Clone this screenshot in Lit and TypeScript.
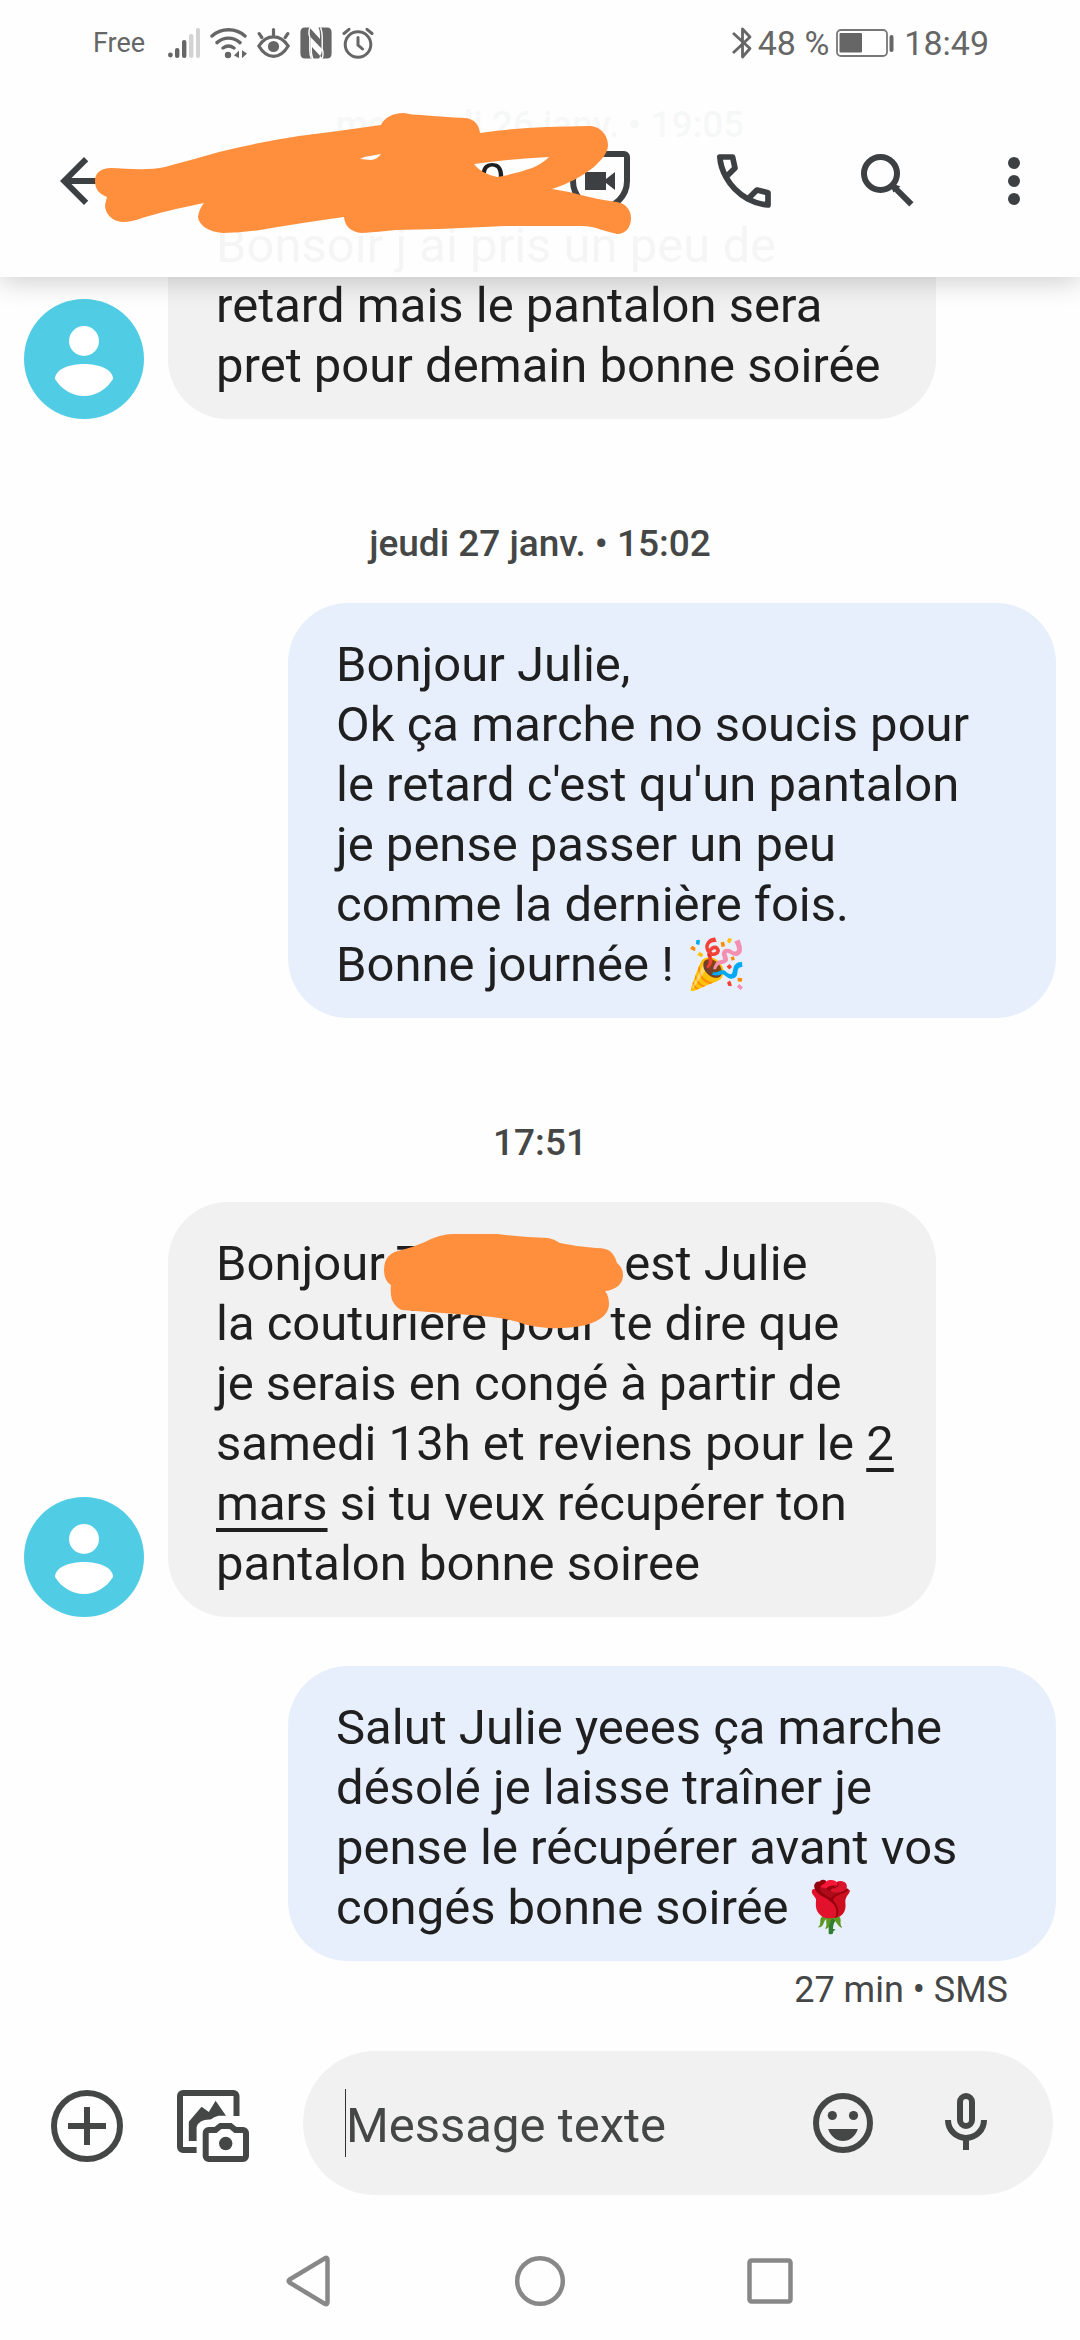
import { LitElement, html, css, svg, nothing } from "lit";
import { customElement, property } from "lit/decorators.js";

const FONT = css`"Roboto", "Liberation Sans", "Noto Color Emoji", sans-serif`;

/* Status bar at the very top of the phone. */
@customElement("status-bar")
class StatusBar extends LitElement {
  static styles = css`
    :host {
      display: flex;
      align-items: center;
      justify-content: space-between;
      height: 84px;
      padding: 2px 91px 0 93px;
      color: #666;
      font-family: ${FONT};
      box-sizing: border-box;
    }
    .group {
      display: flex;
      align-items: center;
      gap: 10px;
    }
    .carrier {
      font-size: 27px;
      margin-right: 13px;
    }
    .level {
      font-size: 34px;
      margin: 0 -3px 0 -4px;
    }
    .clock {
      font-size: 34px;
    }
    svg {
      display: block;
    }
  `;
  render() {
    return html`
      <div class="group">
        <span class="carrier">Free</span>
        <svg width="32" height="32" viewBox="0 0 32 32" fill="currentColor" aria-label="Signal">
          <circle cx="2.4" cy="28" r="2.4" />
          <rect x="7" y="21" width="4.4" height="10" rx="2" />
          <rect x="14" y="13" width="4.4" height="18" rx="2" />
          <rect x="21" y="7" width="4.4" height="24" rx="2" fill="#d3d3d3" />
          <rect x="28" y="1" width="4" height="30" rx="2" fill="#d3d3d3" />
        </svg>
        <svg width="37" height="32" viewBox="0 0 37 32" fill="none" stroke="currentColor" stroke-width="3.4" stroke-linecap="round" aria-label="Wi-Fi">
          <path d="M2 9C11 .6 26 .6 35 9M7 15.6C14 9.6 23 9.6 30 15.6M13 21C16.5 18.4 20.5 18.4 24 21" />
          <circle cx="18" cy="28" r="3.2" fill="currentColor" stroke="none" />
          <path d="M24 28.6l5-5v7.4M37 26.5l-5 4.8v-8" stroke="none" fill="currentColor" />
        </svg>
        <svg width="33" height="32" viewBox="0 0 33 32" fill="none" stroke="currentColor" stroke-width="3.2" stroke-linecap="round" aria-label="Eye comfort">
          <path d="M1.8 19C6 12.5 11 9.8 16.5 9.8S27 12.5 31.2 19C27 26 22 29.4 16.5 29.4S6 26 1.8 19zM16.5 9V2.5M4.8 10.5L2.2 6.6M28.2 10.5l2.6-3.9" />
          <circle cx="16.5" cy="19.5" r="5.6" fill="currentColor" stroke="none" />
        </svg>
        <svg width="32" height="32" viewBox="0 0 32 32" fill="currentColor" aria-label="NFC">
          <path d="M5 .6h4.5L20 12V9.5c0-4-.4-6.5-1.6-8.9h2.2C21.8 3 22 6 22 9.5V22L10.5 10v13c0 3.5.6 6 1.8 8.4H5c-3 0-4.6-1.8-4.6-5V5.6C.4 2.4 2 .6 5 .6z" />
          <path d="M27 31.4h-4.5L12 20v2.5c0 4 .4 6.5 1.6 8.9h5.5C21 27.5 22 26 22 22V9.5C22 6 21.8 3 20.6 .6H27c3 0 4.6 1.8 4.6 5v20.8c0 3.2-1.6 5-4.6 5z" />
          <path d="M9.8 .6c-1 3-1 7 0 9.4V23c0 3.5.6 6 1.6 8.4M22.2 31.4c1-3 1-7 0-9.4V9.5c0-3.5-.6-6-1.6-8.9" fill="none" stroke="#fff" stroke-width="1.4" />
        </svg>
        <svg width="32" height="32" viewBox="0 0 32 32" fill="none" stroke="currentColor" stroke-width="3" stroke-linecap="round" aria-label="Alarm">
          <circle cx="16" cy="17.5" r="12.8" />
          <path d="M16 10.5V18l4.5 4M2 6.5l5-4.2M30 6.5l-5-4.2" />
        </svg>
      </div>
      <div class="group">
        <svg width="20" height="32" viewBox="0 0 20 32" fill="none" stroke="currentColor" stroke-width="2.8" stroke-linejoin="round" aria-label="Bluetooth">
          <path d="M1 6l17 15.5L10.5 30V2L18 10 1 26" />
        </svg>
        <span class="level">48 %</span>
        <svg width="58" height="28" viewBox="0 0 58 28" aria-label="Battery">
          <rect x="1" y="1" width="50" height="26" rx="4" fill="#fff" stroke="#777" stroke-width="1.8" />
          <rect x="3.5" y="4" width="22.5" height="19.5" rx="1" fill="#666" />
          <rect x="53.5" y="6" width="4" height="17" rx="2" fill="#666" />
        </svg>
        <span class="clock">18:49</span>
      </div>
    `;
  }
}

/* Title bar of the conversation, with its actions. */
@customElement("conversation-bar")
class ConversationBar extends LitElement {
  static styles = css`
    :host {
      display: flex;
      position: relative;
      align-items: center;
      height: 193px;
      padding: 0 12px 0 36px;
      box-sizing: border-box;
      color: #3c4043;
      font-family: ${FONT};
    }
    .action {
      display: flex;
      align-items: center;
      justify-content: center;
      width: 144px;
      height: 144px;
      padding: 0;
      border: 0;
      background: none;
      color: inherit;
    }
    .narrow {
      width: 108px;
    }
    .back {
      width: 96px;
    }
    .title {
      flex: 1;
      margin: 0;
      padding-right: 22px;
      text-align: right;
      font-size: 49px;
      line-height: 60px;
      font-weight: 400;
      color: #1f1f1f;
    }
    .scribble {
      position: absolute;
      left: 0;
      top: 0;
      pointer-events: none;
    }
  `;
  render() {
    return html`
      <button class="action back" aria-label="Retour">
        <svg width="72" height="72" viewBox="0 0 24 24" fill="currentColor">
          <path d="M20 11H7.83l5.59-5.59L12 4l-8 8 8 8 1.41-1.41L7.83 13H20v-2z" />
        </svg>
      </button>
      <h1 class="title">0</h1>
      <button class="action" aria-label="Appel vidéo">
        <svg width="72" height="72" viewBox="0 0 72 72" fill="none" stroke="currentColor" stroke-width="6">
          <path d="M36 9H60a3 3 0 0 1 3 3V36A27 27 0 1 1 36 9z" />
          <path d="M21 27h21v7l9-7v18l-9-7v7H21z" fill="currentColor" stroke="none" />
        </svg>
      </button>
      <button class="action" aria-label="Appeler">
        <svg width="72" height="72" viewBox="0 0 24 24" fill="none" stroke="currentColor" stroke-width="1.9" stroke-linejoin="round">
          <path d="M3.95 4H8.2L9 7.7 6 10.7C4.9 8.7 4.1 6.4 3.95 4zM6 10.7C7.7 13.8 10.3 16.3 13.3 18L16.3 15 20 15.9V20C17.6 19.8 15.3 19.1 13.3 18" />
        </svg>
      </button>
      <button class="action" aria-label="Rechercher">
        <svg width="72" height="72" viewBox="0 0 24 24" fill="none" stroke="currentColor" stroke-width="2">
          <circle cx="9.5" cy="9.5" r="5.5" />
          <path d="M14 14l5.8 5.8" />
          <path d="M14.2 13.6l1 .4-1.2 1-.3-1z" stroke-width="1" />
        </svg>
      </button>
      <button class="action narrow" aria-label="Plus d'options">
        <svg width="72" height="72" viewBox="0 0 24 24" fill="currentColor">
          <circle cx="12" cy="6" r="2" /><circle cx="12" cy="12" r="2" /><circle cx="12" cy="18" r="2" />
        </svg>
      </button>
      <svg class="scribble" width="640" height="160" viewBox="0 84 640 160" fill="#ff8f3c" fill-rule="evenodd" aria-hidden="true">
        <path
          d="M111 168C122 168 136 170 147 169Q160 169 172 165Q195 159 219 152Q260 142 299 136Q340 131 381 125C384 118 392 113 404 113Q412 115 421 115Q445 117 465 118C475 119 479 125 480 133Q515 128 547 127L589 126C601 126 608 136 608 145C608 154 600 161 594 167Q575 182 552 189Q566 191 581 195Q600 200 617 202C627 204 631 211 631 218C631 227 626 234 617 234Q609 232 602 230Q592 226 581 226H505Q450 229 396 230Q378 232 362 233C350 232 345 226 344 217Q300 223 260 230Q240 233 223 233C208 232 199 225 198 217Q199 209 204 203Q165 211 142 218Q132 222 122 222C112 221 105 214 105 205L107 197C99 194 95 189 95 181C95 173 101 168 111 168zM474 164Q511 159 549 157Q542 164 532 168Q515 174 497 177Q480 173 474 164zM360 159Q365 156 370 156L381 154Q378 159 371 160z"
        />
      </svg>
    `;
  }
}

@customElement("contact-avatar")
class ContactAvatar extends LitElement {
  static styles = css`
    :host {
      display: block;
      flex: none;
      width: 120px;
      height: 120px;
    }
  `;
  render() {
    return html`<svg width="120" height="120" viewBox="0 0 120 120" aria-hidden="true">
      <circle cx="60" cy="60" r="60" fill="#50cde4" />
      <circle cx="60" cy="42" r="15" fill="#fff" />
      <path d="M31 80C31 70 46 65 60 65S89 70 89 80C83 90 72 97 60 97S37 90 31 80z" fill="#fff" />
    </svg>`;
  }
}

/* One message; received ones sit on the left beside an avatar. */
@customElement("chat-bubble")
class ChatBubble extends LitElement {
  @property({ type: Boolean, reflect: true }) sent = false;
  static styles = css`
    :host {
      display: flex;
      align-items: flex-end;
      gap: 24px;
      padding: 0 144px 0 24px;
      font-family: ${FONT};
    }
    :host([sent]) {
      padding: 0 24px 0 288px;
    }
    .bubble {
      position: relative;
      flex: 1;
      min-width: 0;
      padding: 32px 24px 23px 48px;
      border-radius: 60px;
      background: #f1f1f1;
      color: #1f1f1f;
      font-size: 49px;
      line-height: 60px;
      white-space: nowrap;
      box-sizing: border-box;
    }
    :host([sent]) .bubble {
      background: #e7effc;
    }
  `;
  render() {
    return html`
      ${this.sent ? nothing : html`<contact-avatar></contact-avatar>`}
      <div class="bubble"><slot></slot></div>
    `;
  }
}

@customElement("compose-bar")
class ComposeBar extends LitElement {
  static styles = css`
    :host {
      display: flex;
      align-items: center;
      padding: 0 27px 27px 39px;
      color: #444746;
      font-family: ${FONT};
    }
    .tools {
      display: flex;
      gap: 30px;
      padding: 6px 42px 0 0;
    }
    .tool {
      display: flex;
      align-items: center;
      justify-content: center;
      width: 96px;
      height: 96px;
      padding: 0;
      border: 0;
      background: none;
      color: inherit;
    }
    .field {
      display: flex;
      flex: 1;
      min-width: 0;
      align-items: center;
      gap: 27px;
      height: 144px;
      padding: 0 39px 0 42px;
      border-radius: 72px;
      background: #f1f1f1;
      box-sizing: border-box;
    }
    .input {
      flex: 1;
      min-width: 0;
      height: 68px;
      padding: 4px 0 0;
      border: 0;
      border-left: 1px solid #333;
      border-radius: 0;
      outline: 0;
      background: none;
      font: 49px/60px ${FONT};
      color: #1f1f1f;
      box-sizing: border-box;
    }
    .input::placeholder {
      color: #444746;
      opacity: 1;
    }
  `;
  render() {
    return html`
      <div class="tools">
        <button class="tool" aria-label="Ajouter">
          <svg width="72" height="72" viewBox="0 0 72 72" fill="none" stroke="currentColor" stroke-width="6">
            <circle cx="36" cy="36" r="33" /><path d="M36 17v38M17 36h38" />
          </svg>
        </button>
        <button class="tool" aria-label="Galerie et appareil photo">
          <svg width="72" height="72" viewBox="0 0 72 72" fill="none" stroke="currentColor" stroke-width="6">
            <path d="M59.5 26V6a3 3 0 0 0-3-3H6a3 3 0 0 0-3 3V57a3 3 0 0 0 3 3H19.6" />
            <path d="M11.8 51V31.7L24.6 16.7 31.8 22 38.6 10.7 49 25.7H41.5Q37 27 33.6 29.5 22 29 19.6 37V51z" fill="currentColor" stroke="none" />
            <path d="M31.7 40H38.5L43.5 36H53.5L58.5 40H66a3 3 0 0 1 3 3V66a3 3 0 0 1-3 3H31.7a3 3 0 0 1-3-3V43a3 3 0 0 1 3-3z" />
            <circle cx="48.7" cy="53.5" r="6.7" fill="currentColor" stroke="none" />
          </svg>
        </button>
      </div>
      <div class="field">
        <input class="input" type="text" placeholder="Message texte" aria-label="Message texte" />
        <button class="tool" aria-label="Emoji">
          <svg width="60" height="60" viewBox="0 0 60 60" fill="currentColor">
            <circle cx="30" cy="30" r="27" fill="none" stroke="currentColor" stroke-width="6" />
            <circle cx="19.3" cy="22.5" r="4.6" /><circle cx="40.5" cy="22.5" r="4.6" />
            <path d="M15.2 36H44.8C42.5 43.5 36.5 48 30 48S17.5 43.5 15.2 36z" />
          </svg>
        </button>
        <button class="tool" aria-label="Message vocal">
          <svg width="42" height="60" viewBox="0 0 42 60" fill="none" stroke="currentColor" stroke-width="6">
            <rect x="15" y="3" width="12" height="30" rx="6" />
            <path d="M3 27a18 18 0 0 0 36 0M21 45v12" />
          </svg>
        </button>
      </div>
    `;
  }
}

@customElement("system-nav")
class SystemNav extends LitElement {
  static styles = css`
    :host {
      display: flex;
      align-items: center;
      justify-content: center;
      gap: 134px;
      height: 118px;
      color: #888;
    }
    .key {
      display: flex;
      align-items: center;
      justify-content: center;
      width: 96px;
      height: 96px;
      padding: 0;
      border: 0;
      background: none;
      color: inherit;
    }
  `;
  render() {
    const shapes = [
      { label: "Retour", shape: svg`<path d="M5.5 24.5Q4 26 5.5 27.5L41 49Q43.5 50 43.5 47V5Q43.5 2 41 3.2Z" />` },
      { label: "Accueil", shape: svg`<circle cx="26" cy="26" r="22.8" />` },
      { label: "Applications récentes", shape: svg`<rect x="5.5" y="5.5" width="41" height="41" rx="2" />` },
    ];
    return shapes.map(
      (s) => html`<button class="key" aria-label=${s.label}>
        <svg width="52" height="52" viewBox="0 0 52 52" fill="none" stroke="currentColor" stroke-width="4.5">${s.shape}</svg>
      </button>`
    );
  }
}

@customElement("app-root")
class AppRoot extends LitElement {
  static styles = css`
    :host {
      display: flex;
      position: relative;
      flex-direction: column;
      min-height: 100vh;
      overflow: hidden;
      background: #fefefe;
      font-family: ${FONT};
    }
    .top {
      position: absolute;
      inset: 0 0 auto 0;
      z-index: 1;
      background: rgba(254, 254, 254, 0.96);
      box-shadow: 0 4px 26px rgba(0, 0, 0, 0.2);
    }
    .thread {
      display: flex;
      flex: 1;
      flex-direction: column;
    }
    .stamp {
      margin: 0;
      padding: 101px 0 35px;
      text-align: center;
      font-size: 37px;
      line-height: 48px;
      font-weight: 500;
      color: #444746;
    }
    .reply {
      margin-top: 49px;
    }
    .meta {
      margin: 5px 0 0;
      padding: 0 72px 0 0;
      text-align: right;
      font-size: 36px;
      line-height: 48px;
      color: #444746;
    }
    .date {
      color: inherit;
      text-decoration: underline;
      text-decoration-thickness: 4px;
      text-underline-offset: 8px;
    }
    .masked {
      display: inline-block;
      width: 199px;
    }
    .scribble {
      position: absolute;
      left: 216px;
      top: 31px;
    }
  `;
  render() {
    return html`
      <header class="top">
        <status-bar></status-bar>
        <conversation-bar></conversation-bar>
      </header>
      <main class="thread">
        <p class="stamp">mercredi 26 janv. • 19:05</p>
        <chat-bubble>Bonsoir j ai pris un peu de<br />retard mais le pantalon sera<br />pret pour demain bonne soirée</chat-bubble>
        <p class="stamp">jeudi 27 janv. • 15:02</p>
        <chat-bubble sent>Bonjour Julie,<br />Ok ça marche no soucis pour<br />le retard c'est qu'un pantalon<br />je pense passer un peu<br />comme la dernière fois.<br />Bonne journée ! 🎉</chat-bubble>
        <p class="stamp">17:51</p>
        <chat-bubble>Bonjour T<span class="masked"></span>est Julie<br />la couturière pour te dire que<br />je serais en congé à partir de<br />samedi 13h et reviens pour le <a class="date" href="#">2<br />mars</a> si tu veux récupérer ton<br />pantalon bonne soiree
          <svg class="scribble" width="240" height="96" viewBox="384 1233 240 96" fill="#ff8f3c" aria-hidden="true">
            <path d="M402 1250Q413 1247 425 1242Q440 1234 453 1234H497Q522 1237 548 1238Q554 1239 560 1243Q578 1247 596 1248Q608 1248 612 1253Q616 1258 617 1263Q623 1268 623 1275C623 1284 616 1290 605 1291Q609 1296 609 1304C609 1314 600 1321 586 1325Q566 1329 548 1328Q536 1327 527 1325Q510 1319 492 1317Q474 1315 456 1314L402 1310Q396 1308 392 1300Q390 1292 391 1285C386 1282 384 1276 384 1270C384 1258 390 1252 402 1250z" />
          </svg>
        </chat-bubble>
        <chat-bubble class="reply" sent>Salut Julie yeees ça marche<br />désolé je laisse traîner je<br />pense le récupérer avant vos<br />congés bonne soirée 🌹</chat-bubble>
        <p class="meta">27 min • SMS</p>
      </main>
      <compose-bar></compose-bar>
      <system-nav></system-nav>
    `;
  }
}
